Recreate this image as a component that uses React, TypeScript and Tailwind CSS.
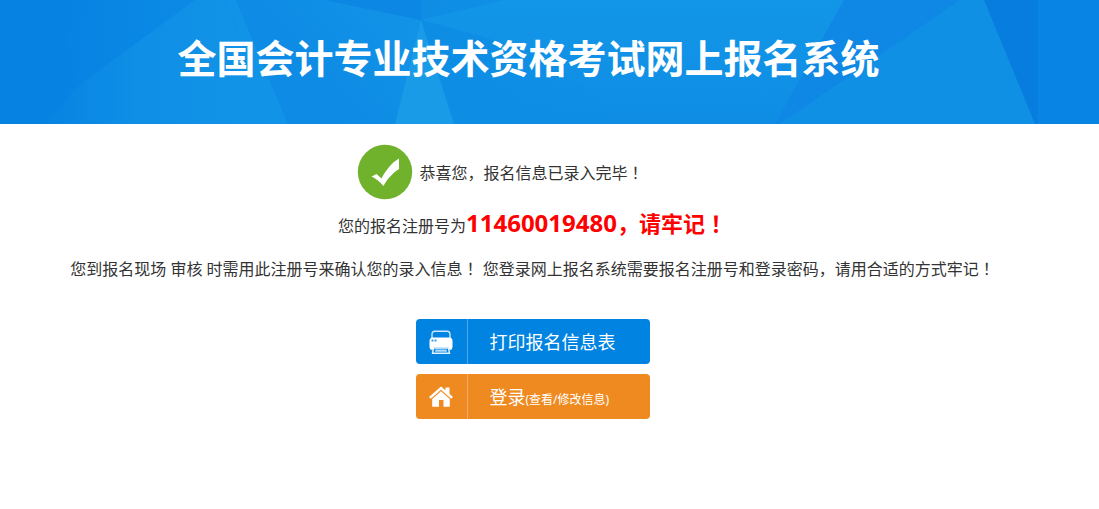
import React from "react";

function BannerArt() {
  return (
    <svg
      className="absolute inset-0 h-full w-full"
      viewBox="0 0 1099 124"
      preserveAspectRatio="none"
      aria-hidden="true"
    >
      <defs>
        <linearGradient id="base" x1="0" x2="1" y1="0" y2="0">
          <stop offset="0.03" stopColor="#0682e3" />
          <stop offset="0.16" stopColor="#0b89e5" />
          <stop offset="0.3" stopColor="#0e8be5" />
          <stop offset="0.45" stopColor="#108fe6" />
          <stop offset="0.7" stopColor="#1090e6" />
        </linearGradient>
        <linearGradient id="left" x1="0" x2="1" y1="0" y2="0">
          <stop offset="0" stopColor="#0783e2" />
          <stop offset="0.4" stopColor="#0f8fe6" />
          <stop offset="1" stopColor="#1194e7" />
        </linearGradient>
        <linearGradient id="mid" x1="0" x2="1" y1="0.6" y2="0">
          <stop offset="0.25" stopColor="#0e8be5" />
          <stop offset="1" stopColor="#1294e7" />
        </linearGradient>
        <linearGradient id="center" x1="0" x2="0" y1="0" y2="1">
          <stop offset="0" stopColor="#1296e7" />
          <stop offset="1" stopColor="#0f8de5" />
        </linearGradient>
        <linearGradient id="shade" x1="0" x2="1" y1="0" y2="0">
          <stop offset="0.2" stopColor="#0e8de5" />
          <stop offset="1" stopColor="#0e8de5" stopOpacity="0" />
        </linearGradient>
      </defs>
      <rect width="1099" height="124" fill="url(#base)" />
      <path d="M0 0H88L68 35L75 88L45 124H0Z" fill="#0682e3" opacity="0.5" />
      <path d="M195 0H226L273 124H45L76 88Z" fill="url(#left)" />
      <path d="M195 0H226L273 124H288L236 0Z" fill="#1194e7" />
      <path d="M236 0H325L421 20L395 124H288Z" fill="url(#mid)" />
      <path d="M325 0H421V20Z" fill="#0c87e3" />
      <path d="M421 20L505 0H844L775 124H454V40L485 37Z" fill="url(#center)" />
      <path d="M421 20L530 50L640 124H454Z" fill="url(#shade)" />
      <path d="M421 20L395 124H454Z" fill="#199be7" />
      <path d="M844 0H960L780 124H775Z" fill="#0e88e4" />
      <path d="M960 0H984L1035 124H780Z" fill="#1090e5" />
      <path d="M984 0H1038V124H1035Z" fill="#077ddf" />
      <path d="M1038 0H1099V124H1038Z" fill="#0884e4" />
    </svg>
  );
}

function CheckBadge() {
  return (
    <svg className="h-14 w-14" viewBox="0 0 56 56" aria-hidden="true">
      <circle cx="28" cy="28" r="27.2" fill="#71b22d" />
      <path
        d="M14.500 32.500L19.500 30L24.500 34.500C29 26 35 18.500 42 14.500V25C36 29 30 35 26.500 42C23 38 19 34.500 14.500 32.500Z"
        fill="#fff"
      />
    </svg>
  );
}

function PrinterIcon() {
  return (
    <svg className="h-6 w-6" viewBox="0 0 24 24" aria-hidden="true">
      <path d="M3 8V4.500Q3 1.200 6 1.200H18Q21 1.200 21 4.500V8" fill="none" stroke="#cce6fa" strokeWidth="1.400" />
      <path d="M3 7.500H21Q23.500 8 23.500 11V16.500Q23.500 20 20.500 20L19.500 17.500H4.500L3.500 20Q0.500 20 0.500 16.500V11Q0.500 8 3 7.500Z" fill="#fff" />
      <path d="M2.500 9.500H4.500V11.500H2.500ZM5.500 9.500H7.500V11.500H5.500Z" fill="#3b9fe9" />
      <path d="M4.500 18H19.500L20.500 23.300H3.500Z" fill="none" stroke="#e5f3fd" strokeWidth="1.400" />
      <path d="M6.500 19.500H17.500L18 21.800H6Z" fill="#b3daf7" />
    </svg>
  );
}

function HouseIcon() {
  return (
    <svg className="h-6 w-6" viewBox="0 0 24 24" fill="#fff" aria-hidden="true">
      <path d="M12 1.500L16.500 5.200V2.500H20.500V8.800L24 12L22.200 13.800L12 4.800L1.800 13.800L0 12Z" />
      <path d="M12 6.200L20.800 14V21.800H14.500V15H10V21.800H3.200V14Z" />
    </svg>
  );
}

function Exclaim() {
  return (
    <span lang="zh-TW" className="font-['Noto_Sans_CJK_TC',sans-serif]">
      ！
    </span>
  );
}

type ActionProps = { color: string; icon: React.ReactNode; children: React.ReactNode };

function ActionButton({ color, icon, children }: ActionProps) {
  return (
    <button type="button" className={`flex h-[45px] w-[234px] items-center rounded text-left text-lg text-white ${color}`}>
      <span className="flex h-full w-[52px] items-center justify-center border-r border-white/30">{icon}</span>
      <span className="pl-[22px] leading-6">{children}</span>
    </button>
  );
}

export default function App() {
  return (
    <div className="min-h-screen bg-white font-['Noto_Sans','Noto_Sans_CJK_SC',sans-serif] text-base text-[#333]" lang="zh-CN">
      <header className="relative h-[124px] overflow-hidden bg-[#1090e6]">
        <BannerArt />
        <h1 className="relative pt-7 pr-[42px] text-center text-[39px] leading-[60px] font-bold text-white">
          全国会计专业技术资格考试网上报名系统
        </h1>
      </header>
      <main className="flex flex-col items-center pt-5 pr-[34px]">
        <div className="flex items-center gap-1.5 pr-16">
          <CheckBadge />
          <p>恭喜您，报名信息已录入完毕<Exclaim /></p>
        </div>
        <p className="mt-1 leading-9">
          您的报名注册号为
          <strong className="text-[22px] text-[#f00]">
            <span className="text-2xl">11460019480</span>，请牢记<Exclaim />
          </strong>
        </p>
        <p className="mt-3 leading-6">
          您到报名现场 审核 时需用此注册号来确认您的录入信息<Exclaim /> 您登录网上报名系统需要报名注册号和登录密码，请用合适的方式牢记<Exclaim />
        </p>
        <div className="mt-[38px] flex flex-col gap-2.5">
          <ActionButton color="bg-[#0083e1]" icon={<PrinterIcon />}>打印报名信息表</ActionButton>
          <ActionButton color="bg-[#ee8a1f]" icon={<HouseIcon />}>
            登录<span className="text-xs">(查看/修改信息)</span>
          </ActionButton>
        </div>
      </main>
    </div>
  );
}
